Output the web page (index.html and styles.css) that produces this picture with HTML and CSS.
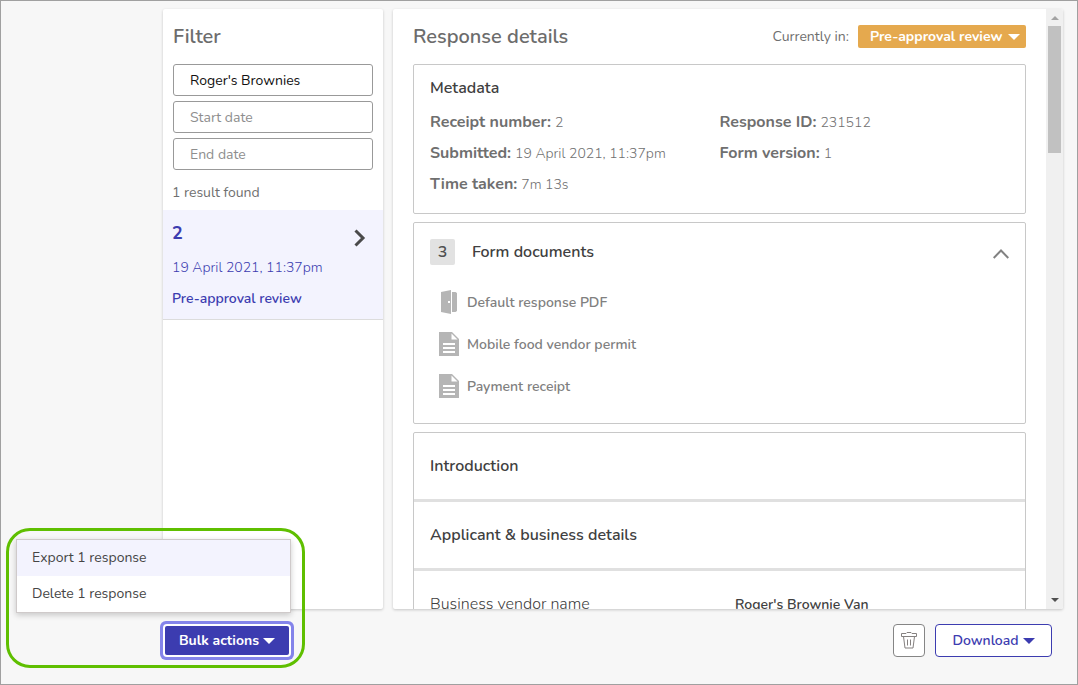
FILE: index.html
```html
<!DOCTYPE html>
<html lang="en">
<head>
<meta charset="utf-8">
<title>Responses</title>
<link rel="stylesheet" href="styles.css">
</head>
<body>
<div class="app">
  <main class="workspace">
    <aside class="panel filter">
      <h1 class="panel-title">Filter</h1>
      <form class="filter-form">
        <input class="field" type="text" aria-label="Search" value="Roger's Brownies">
        <input class="field" type="text" aria-label="Start date" placeholder="Start date">
        <input class="field" type="text" aria-label="End date" placeholder="End date">
      </form>
      <p class="result-count">1 result found</p>
      <a class="result" href="#response">
        <span class="result-text">
          <span class="result-number">2</span>
          <span class="result-date">19 April 2021, 11:37pm</span>
          <span class="result-status">Pre-approval review</span>
        </span>
        <svg class="result-chevron" width="12" height="18" viewBox="0 0 12 18" fill="none" stroke="#4a4a4a" stroke-width="3"><path d="M1.500 1.500 9 9l-7.500 7.500"/></svg>
      </a>
    </aside>

    <section class="panel details" id="response">
      <div class="details-body">
        <header class="details-header">
          <h1 class="panel-title">Response details</h1>
          <div class="status">
            <label for="status">Currently in:</label>
            <span class="status-control">
              <select id="status" class="status-select"><option>Pre-approval review</option></select>
              <svg class="status-caret" width="12" height="6" viewBox="0 0 12 6" fill="#fff"><path d="M0 0h12L6 6z"/></svg>
            </span>
          </div>
        </header>

        <section class="card metadata">
          <h2 class="card-title">Metadata</h2>
          <dl class="meta-grid">
            <div class="meta"><dt>Receipt number:</dt><dd>2</dd></div>
            <div class="meta"><dt>Response ID:</dt><dd>231512</dd></div>
            <div class="meta"><dt>Submitted:</dt><dd>19 April 2021, 11:37pm</dd></div>
            <div class="meta"><dt>Form version:</dt><dd>1</dd></div>
            <div class="meta"><dt>Time taken:</dt><dd>7m 13s</dd></div>
          </dl>
        </section>

        <section class="card documents">
          <div class="documents-header">
            <span class="count">3</span>
            <h2 class="card-title">Form documents</h2>
            <button class="collapse" type="button" aria-label="Collapse form documents">
              <svg width="16" height="12" viewBox="0 0 16 12" fill="none" stroke="#828282" stroke-width="2"><path d="M.7 10 8 2.500l7.300 7.500"/></svg>
            </button>
          </div>
          <ul class="document-list">
            <li><a class="document" href="#pdf">
              <svg width="20" height="24" viewBox="0 0 20 24" fill="#b5b5b5"><path d="M2 2 12 0v24L2 22z"/><path d="M13 2h3.500l1.500 1v18l-1.500 1H13z"/><rect x="9" y="11" width="2" height="2" fill="#fff"/></svg>
              Default response PDF</a></li>
            <li><a class="document" href="#permit">
              <svg width="20" height="24" viewBox="0 0 20 24" fill="#b5b5b5"><path d="M0 0h13l7 7v17H0z"/><path d="M12.500 1.500V7.500h6z" fill="#fff"/><path d="M4 11h12v2H4zM4 15h12v2H4zM4 19h12v2H4z" fill="#fff"/></svg>
              Mobile food vendor permit</a></li>
            <li><a class="document" href="#receipt">
              <svg width="20" height="24" viewBox="0 0 20 24" fill="#b5b5b5"><path d="M0 0h13l7 7v17H0z"/><path d="M12.500 1.500V7.500h6z" fill="#fff"/><path d="M4 11h12v2H4zM4 15h12v2H4zM4 19h12v2H4z" fill="#fff"/></svg>
              Payment receipt</a></li>
          </ul>
        </section>

        <section class="card answers">
          <h2 class="card-title answers-row">Introduction</h2>
          <h2 class="card-title answers-row">Applicant &amp; business details</h2>
          <div class="answers-row answer">
            <span>Business vendor name</span>
            <strong>Roger's Brownie Van</strong>
          </div>
        </section>
      </div>
      <div class="scrollbar" aria-hidden="true">
        <svg width="8" height="4" viewBox="0 0 8 4" fill="#a3a3a3"><path d="M4 0l4 4H0z"/></svg>
        <div class="scroll-track"><div class="scroll-thumb"></div></div>
        <svg width="8" height="4" viewBox="0 0 8 4" fill="#505050"><path d="M0 0h8L4 4z"/></svg>
      </div>
    </section>
  </main>

  <footer class="actions">
    <div class="bulk">
      <div class="highlight"></div>
      <div class="menu" role="menu">
        <button class="menu-item active" type="button" role="menuitem">Export 1 response</button>
        <button class="menu-item" type="button" role="menuitem">Delete 1 response</button>
      </div>
      <button class="button primary" type="button">Bulk actions
        <svg width="12" height="6" viewBox="0 0 12 6" fill="currentColor"><path d="M0 0h12L6 6z"/></svg></button>
    </div>
    <div class="response-actions">
      <button class="button trash" type="button" aria-label="Delete response">
        <svg width="16" height="17" viewBox="0 0 16 17" fill="none" stroke="#858180"><path d="M.5 4.500v-3h4.500l1-1h4l1 1h4.500v3zM2.500 4.500l1.500 11.500h8l1.500-11.500M6.500 7.500v6M9.500 7.500v6"/></svg>
      </button>
      <button class="button outline" type="button">Download
        <svg width="12" height="6" viewBox="0 0 12 6" fill="currentColor"><path d="M0 0h12L6 6z"/></svg></button>
    </div>
  </footer>
</div>
</body>
</html>
```
FILE: styles.css
```css
* { box-sizing: border-box; }

body {
  margin: 0;
  font-family: Nunito, Lato, sans-serif;
  font-size: 14px;
  line-height: 20px;
  color: #6f6f6f;
}

button, input, select { font: inherit; }

h1, h2, p, dl, dd, ul { margin: 0; padding: 0; }

.app {
  display: flex;
  flex-direction: column;
  height: 100vh;
  padding: 8px 14px 0 162px;
  border: 1px solid #a0a0a0;
  background: #f7f7f7;
}

.workspace {
  display: grid;
  grid-template-columns: 220px minmax(0, 1fr);
  gap: 10px;
  flex: 1;
  min-height: 0;
}

.panel {
  background: #fff;
  border-radius: 2px;
  box-shadow: 0 1px 3px rgba(0, 0, 0, .2);
}

.panel-title {
  font-size: 20px;
  line-height: 24px;
  font-weight: 650;
  color: #6c6c6c;
}

.filter { padding-top: 16px; }
.filter .panel-title { padding: 0 10px; }

.filter-form {
  display: flex;
  flex-direction: column;
  gap: 5px;
  padding: 15px 10px 13px;
}

.field {
  width: 100%;
  height: 32px;
  padding: 0 16px;
  border: 1px solid #999;
  border-radius: 3px;
  background: #fff;
  color: #111;
}
.field::placeholder { color: #8e8e8e; opacity: 1; }

.result-count { padding: 0 9px; }

.result {
  display: flex;
  justify-content: space-between;
  margin-top: 7px;
  padding: 11px 17px 10px 9px;
  border-bottom: 1px solid #dcdcdc;
  background: #f3f3fe;
  color: #3c3cb0;
  text-decoration: none;
}
.result-text { display: flex; flex-direction: column; gap: 11px; }
.result-number { margin-bottom: 2px; font-size: 18px; line-height: 24px; font-weight: 700; }
.result-date { font-weight: 350; }
.result-status { font-weight: 650; }
.result-chevron { margin-top: 8px; }

.details { display: flex; min-height: 0; overflow: hidden; }
.details-body {
  flex: 1;
  min-width: 0;
  padding: 16px 20px 0;
  overflow: hidden;
}

.details-header {
  display: flex;
  justify-content: space-between;
  align-items: flex-start;
  margin-bottom: 15px;
}

.status { display: flex; align-items: center; gap: 9px; }
.status-control { position: relative; display: flex; }
.status-select {
  width: 168px;
  height: 23px;
  padding: 1px 12px 0;
  border: 0;
  border-radius: 2px;
  background: #e5a94e;
  color: #fff;
  font-weight: 700;
  appearance: none;
}
.status-caret { position: absolute; right: 6px; top: 9px; pointer-events: none; }

.card {
  margin-bottom: 8px;
  border: 1px solid #c8c8c8;
  border-radius: 2px;
}

.card-title { font-size: 16px; line-height: 20px; font-weight: 650; color: #404040; }

.metadata { padding: 13px 16px 18px; }
.meta-grid {
  display: grid;
  grid-template-columns: 1fr 1fr;
  gap: 10px 0;
  margin-top: 14px;
}
.meta { display: flex; align-items: baseline; gap: 4px; }
.meta dt { font-size: 16px; font-weight: 700; }
.meta dd { font-weight: 350; }

.documents { padding: 16px 16px 19px; }
.documents-header { display: flex; align-items: center; gap: 17px; }
.count {
  width: 25px;
  border-radius: 2px;
  background: #e2e2e2;
  font-size: 16px;
  line-height: 26px;
  font-weight: 650;
  color: #505050;
  text-align: center;
}
.collapse {
  display: flex;
  margin-left: auto;
  padding: 4px 0 0;
  border: 0;
  background: none;
}

.document-list {
  display: flex;
  flex-direction: column;
  gap: 16px;
  padding: 25px 9px 4px;
  list-style: none;
}
.document {
  display: flex;
  align-items: flex-start;
  gap: 8px;
  line-height: 26px;
  font-weight: 650;
  color: #808080;
  text-decoration: none;
}

.answers-row { padding: 23px 16px; }
.answers-row + .answers-row { border-top: 3px solid #e0e0e0; }
.answer {
  display: grid;
  grid-template-columns: 305px 1fr;
  align-items: baseline;
  font-size: 16px;
  font-weight: 350;
  color: #404040;
}
.answer strong { font-size: 14px; font-weight: 650; }

.scrollbar {
  display: flex;
  flex-direction: column;
  align-items: center;
  width: 17px;
  padding: 7px 2px;
  background: #f0f0f0;
}
.scroll-track { flex: 1; width: 13px; margin: 6px 0; }
.scroll-thumb { height: 127px; background: #c1c1c1; }

.actions {
  display: flex;
  justify-content: space-between;
  align-items: flex-start;
  padding: 15px 11px 27px 0;
}

.bulk { position: relative; padding: 2px; }
.response-actions { display: flex; gap: 10px; }

.button {
  display: flex;
  align-items: center;
  justify-content: center;
  gap: 4px;
  height: 33px;
  border-radius: 4px;
  font-weight: 700;
}
.primary {
  width: 124px;
  height: 29px;
  border: 0;
  border-radius: 2px;
  background: #3c3cb0;
  color: #fff;
  box-shadow: 0 0 0 2px #fff, 0 0 0 5px #8484ea;
}
.outline {
  width: 117px;
  border: 1px solid #3c3cb0;
  background: #fff;
  color: #3c3cb0;
  font-weight: 650;
}
.trash { width: 32px; padding: 0; border: 1px solid #858585; background: #fff; }

.menu {
  position: absolute;
  right: 0;
  bottom: 44px;
  width: 275px;
  border: 1px solid #cfcaca;
  background: #fff;
  box-shadow: 0 2px 6px rgba(0, 0, 0, .2);
}
.menu-item {
  display: block;
  width: 100%;
  height: 36px;
  padding: 0 15px;
  border: 0;
  background: #fff;
  color: #454545;
  text-align: left;
}
.menu-item.active { background: #f3f3fe; }

.highlight {
  position: absolute;
  right: -14px;
  bottom: -11px;
  width: 299px;
  height: 140px;
  border: 3px solid #5fbf00;
  border-radius: 24px;
}
```
